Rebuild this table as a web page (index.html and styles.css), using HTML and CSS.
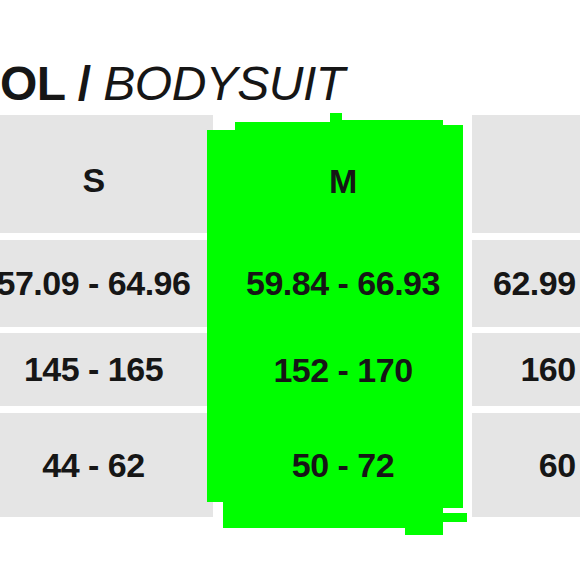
FILE: index.html
```html
<!DOCTYPE html>
<html lang="en">
<head>
<meta charset="utf-8">
<title>Size chart – Bodysuit</title>
<link rel="stylesheet" href="styles.css">
</head>
<body>
<div class="chart">
  <h1 class="title"><span class="title-main">OL /</span> <span class="title-sub">BODYSUIT</span></h1>
  <div class="table">
    <div class="col col-grey col-s">
      <div class="cell cell-head">S</div>
      <div class="cell">57.09 - 64.96</div>
      <div class="cell">145 - 165</div>
      <div class="cell">44 - 62</div>
    </div>
    <div class="col col-active">
      <div class="cell cell-head">M</div>
      <div class="cell">59.84 - 66.93</div>
      <div class="cell">152 - 170</div>
      <div class="cell">50 - 72</div>
    </div>
    <div class="col col-grey col-l">
      <div class="cell cell-head">L</div>
      <div class="cell">62.99 - 70.87</div>
      <div class="cell">160 - 180</div>
      <div class="cell">60 - 80</div>
    </div>
  </div>
</div>
</body>
</html>
```

FILE: styles.css
```css
html, body {
  margin: 0;
  padding: 0;
  background: #ffffff;
  overflow: hidden;
}

.chart {
  width: 760px;
  margin-left: -20px;
  font-family: "Liberation Sans", Arial, sans-serif;
  color: #161616;
}

.title {
  margin: 0;
  padding: 60px 0 0 20px;
  font-size: 48px;
  line-height: 48px;
  font-weight: normal;
  white-space: nowrap;
  letter-spacing: -0.5px;
}

.title-main {
  font-weight: bold;
}

.title-sub {
  font-style: italic;
  font-weight: normal;
}

.table {
  display: flex;
  align-items: flex-start;
  margin-top: 7px;
}

.col {
  display: grid;
  grid-template-rows: 118px 87px 72px 104px;
}

.col-grey {
  row-gap: 7px;
}

.col-grey .cell {
  background: #e5e5e5;
}

.col-grey .cell:nth-child(3) {
  margin-top: -1px;
}

.col-s {
  width: 233px;
  padding-right: 6px;
  box-sizing: border-box;
}

.col-s .cell {
  margin-right: -6px;
  padding-right: 6px;
}

.col-active {
  position: relative;
  z-index: 1;
  width: 260px;
  margin-left: -6px;
  margin-top: -2px;
  padding: 0 0 18px 12px;
  box-sizing: border-box;
  grid-template-rows: 120px 87px 72px 104px;
  row-gap: 7px;
  background: #00fe00;
  clip-path: polygon(
    0 17px, 28px 17px, 28px 9px, 123px 9px, 123px 0, 135px 0,
    135px 7px, 236px 7px, 236px 12px, 256px 12px,
    256px 395px, 236px 395px, 236px 400px, 260px 400px,
    260px 409px, 236px 409px, 236px 422px, 198px 422px,
    198px 415px, 16px 415px, 16px 389px, 0 389px
  );
}

.col-l {
  width: 236px;
  margin-left: 5px;
}

.cell {
  display: flex;
  align-items: center;
  justify-content: center;
  font-size: 34px;
  font-weight: bold;
  white-space: nowrap;
  letter-spacing: -0.5px;
}

.cell-head {
  padding-top: 12px;
  box-sizing: border-box;
}

.col-active .cell-head {
  padding-top: 16px;
}
```
